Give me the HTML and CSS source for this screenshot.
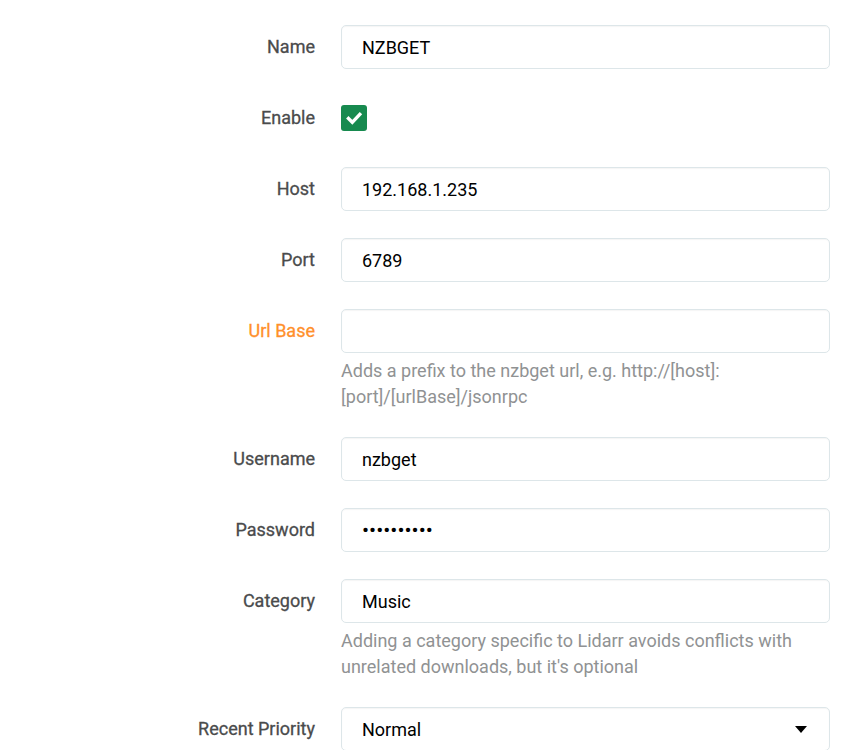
FILE: index.html
```html
<!DOCTYPE html>
<html lang="en">
<head>
    <meta charset="UTF-8">
    <title>Edit Download Client - NZBGet</title>
    <link rel="stylesheet" href="styles.css">
</head>
<body>
    <form class="settings-form">
        <div class="form-group">
            <label class="form-label">Name</label>
            <div class="form-field">
                <input class="text-input" type="text" value="NZBGET">
            </div>
        </div>

        <div class="form-group">
            <label class="form-label">Enable</label>
            <div class="form-field">
                <span class="checkbox checked">
                    <svg viewBox="0 0 26 26" width="26" height="26" fill="none" stroke="#fff" stroke-width="3.4" stroke-linecap="square" stroke-linejoin="miter">
                        <path d="M7.5 13.5l3.8 3.8l7.5-8"></path>
                    </svg>
                </span>
            </div>
        </div>

        <div class="form-group">
            <label class="form-label">Host</label>
            <div class="form-field">
                <input class="text-input" type="text" value="192.168.1.235">
            </div>
        </div>

        <div class="form-group">
            <label class="form-label">Port</label>
            <div class="form-field">
                <input class="text-input" type="text" value="6789">
            </div>
        </div>

        <div class="form-group">
            <label class="form-label advanced">Url Base</label>
            <div class="form-field">
                <input class="text-input" type="text" value="">
                <div class="help-text">Adds a prefix to the nzbget url, e.g. http://[host]:<br>[port]/[urlBase]/jsonrpc</div>
            </div>
        </div>

        <div class="form-group">
            <label class="form-label">Username</label>
            <div class="form-field">
                <input class="text-input" type="text" value="nzbget">
            </div>
        </div>

        <div class="form-group">
            <label class="form-label">Password</label>
            <div class="form-field">
                <input class="text-input password" type="password" value="nzbgetpass">
            </div>
        </div>

        <div class="form-group">
            <label class="form-label">Category</label>
            <div class="form-field">
                <input class="text-input" type="text" value="Music">
                <div class="help-text">Adding a category specific to Lidarr avoids conflicts with unrelated downloads, but it's optional</div>
            </div>
        </div>

        <div class="form-group">
            <label class="form-label">Recent Priority</label>
            <div class="form-field">
                <div class="select-input">
                    <span>Normal</span>
                    <span class="caret"></span>
                </div>
            </div>
        </div>
    </form>
</body>
</html>
```

FILE: styles.css
```css
* {
    margin: 0;
    padding: 0;
    box-sizing: border-box;
}

:root {
    --text-color: #4a4b4c;
    --help-color: #909293;
    --border-color: #dde6e9;
    --advanced-color: #ff902b;
    --check-color: #178a4f;
}

body {
    font-family: Roboto, 'Open Sans', 'Liberation Sans', sans-serif;
    background: #ffffff;
    color: var(--text-color);
    font-size: 18px;
}

.settings-form {
    padding-top: 25px;
}

.form-group {
    display: flex;
    align-items: flex-start;
    margin-bottom: 27px;
}

.form-label {
    width: 315px;
    flex: none;
    text-align: right;
    font-weight: 400;
    line-height: 44px;
    color: var(--text-color);
    -webkit-text-stroke: 0.3px var(--text-color);
}

.form-label.advanced {
    color: var(--advanced-color);
    -webkit-text-stroke-color: var(--advanced-color);
}

.form-field {
    margin-left: 26px;
    width: 489px;
}

.text-input,
.select-input {
    display: block;
    width: 100%;
    height: 44px;
    padding: 0 20px;
    border: 1px solid var(--border-color);
    border-radius: 5px;
    background: #ffffff;
    box-shadow: inset 0 1px 1px rgba(0, 0, 0, 0.04);
    font-family: inherit;
    font-size: 18px;
    color: #000000;
    outline: none;
}

.password {
    font-size: 21px;
}

.checkbox {
    display: block;
    width: 26px;
    height: 26px;
    margin-top: 9px;
    border-radius: 3px;
    background: var(--check-color);
}

.checkbox svg {
    display: block;
}

.help-text {
    margin-top: 5px;
    color: var(--help-color);
    line-height: 26px;
}

.select-input {
    display: flex;
    align-items: center;
    justify-content: space-between;
}

.caret {
    width: 0;
    height: 0;
    margin-right: 2px;
    border-left: 6px solid transparent;
    border-right: 6px solid transparent;
    border-top: 7px solid #000000;
}
```
